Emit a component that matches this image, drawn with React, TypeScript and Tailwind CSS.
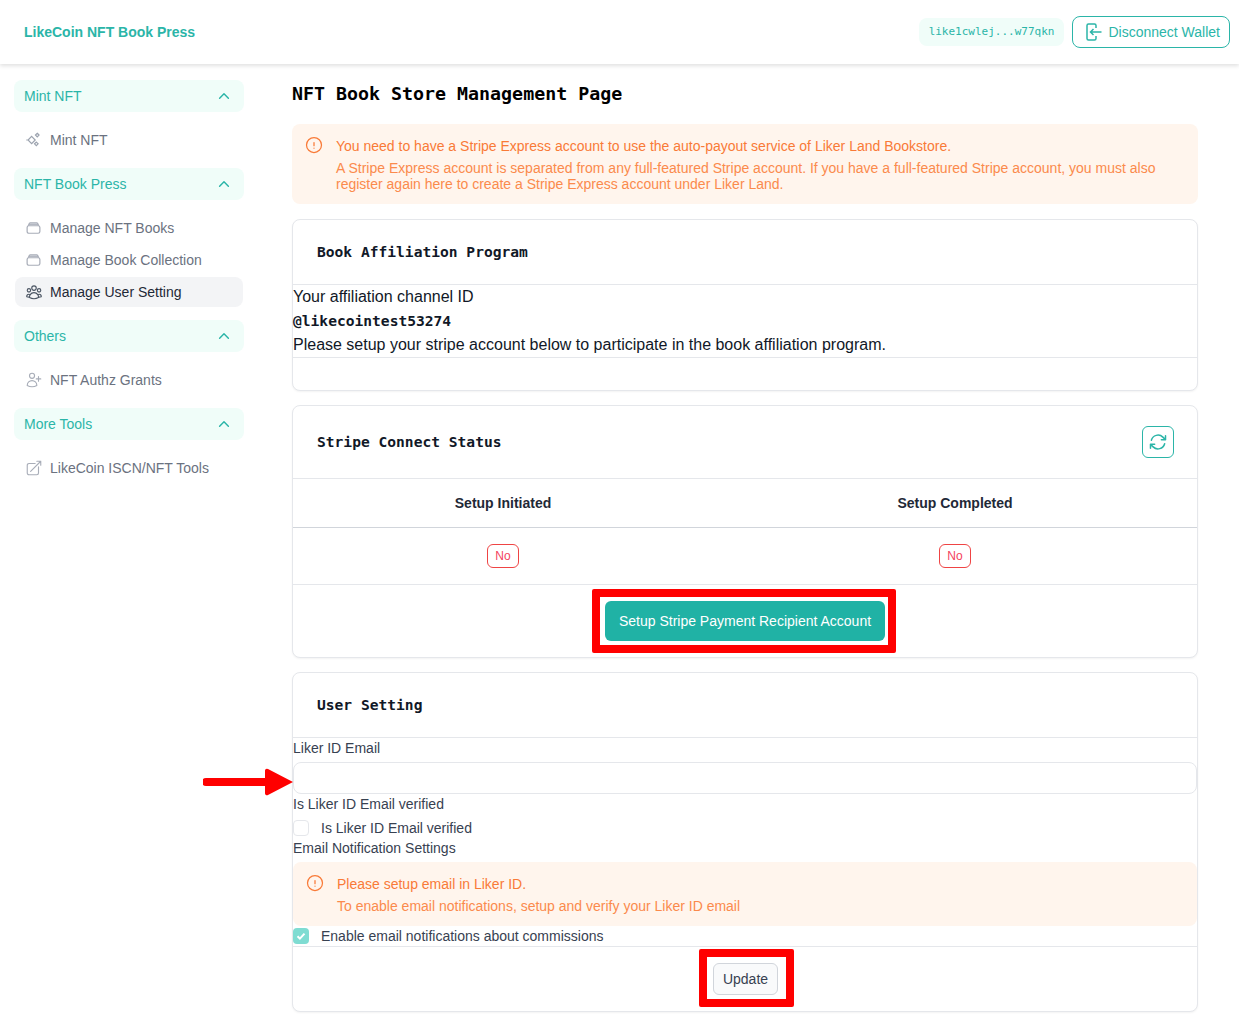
import {
  HiOutlineArrowPath,
  HiOutlineArrowTopRightOnSquare,
  HiOutlineChevronUp,
  HiOutlineExclamationCircle,
  HiOutlineUserGroup,
  HiOutlineUserPlus,
} from "react-icons/hi2";
import type { ReactNode } from "react";

const mono = "font-['DejaVu_Sans_Mono',monospace]";

const SparkIcon = () => (
  <svg width="16" height="16" viewBox="0 0 16 16" fill="none" stroke="#9ca3af" strokeWidth="1.3">
    <path d="M6 4.2L9.8 8 6 11.8 2.2 8z" />
    <path d="M12 .8l1.9 1.9L12 4.6l-1.9-1.9z" />
    <path d="M11 10.2l1.9 1.9L11 14l-1.9-1.9z" />
    <path d="M.3 8h1.4" />
  </svg>
);

const StackIcon = () => (
  <svg width="16" height="16" viewBox="0 0 16 16" fill="none" stroke="#a8adb8" strokeWidth="1.3">
    <rect x="1.2" y="5.6" width="13.6" height="8" rx="1.8" />
    <path d="M2.6 5.6l.6-2a1.4 1.4 0 0 1 1.3-1.1h7a1.4 1.4 0 0 1 1.3 1.1l.6 2" />
    <path d="M3.2 4h9.6" />
  </svg>
);

const DoorIcon = () => (
  <svg width="16" height="18" viewBox="0 0 16 18" fill="none" stroke="currentColor" strokeWidth="1.5">
    <path d="M10 5V2.5A1.5 1.5 0 0 0 8.5 1H2.5A1.5 1.5 0 0 0 1 2.5v13A1.5 1.5 0 0 0 2.5 17h6a1.5 1.5 0 0 0 1.5-1.5V13" />
    <path d="M15.5 9H4.5M7.5 6l-3 3 3 3" />
  </svg>
);

const MenuGroup = ({ label, children }: { label: string; children: ReactNode }) => (
  <div>
    <div className="flex h-8 items-center justify-between rounded-lg bg-[#f0fdf9] pl-[10px] pr-[13px] text-[14px] text-[#2bb5a8]">
      <span>{label}</span>
      <HiOutlineChevronUp className="size-[14px] [stroke-width:2.5]" />
    </div>
    <div className="mx-px flex flex-col gap-[2px] py-[13px]">{children}</div>
  </div>
);

const MenuItem = ({ icon, label, active }: { icon: ReactNode; label: string; active?: boolean }) => (
  <div
    className={`flex h-[30px] items-center gap-[9px] rounded-lg pl-[11px] text-[14px] ${
      active ? "bg-[#f3f4f6] text-[#1f2937]" : "text-[#6b7280]"
    }`}
  >
    <span className="flex w-[15px] justify-center">{icon}</span>
    {label}
  </div>
);

const Card = ({ children }: { children: ReactNode }) => (
  <section className="rounded-lg border border-[#e5e7eb] bg-white shadow-[0_1px_2px_rgba(0,0,0,0.05)]">
    {children}
  </section>
);

const CardTitle = ({ text, h, children }: { text: string; h: string; children?: ReactNode }) => (
  <div className={`flex items-center justify-between border-b border-[#e5e7eb] pl-6 pr-[23px] ${h}`}>
    <h2 className={`${mono} text-[14.6px] font-bold text-[#111827]`}>{text}</h2>
    {children}
  </div>
);

const Alert = ({ className, children }: { className: string; children: ReactNode }) => (
  <div className={`flex rounded-lg bg-[#fff5ed] pl-3 text-[14px] text-[#fb8a4c] ${className}`}>
    <HiOutlineExclamationCircle className="mt-[-1px] size-[20px] shrink-0 text-[#f97a37]" />
    <div className="ml-3 min-w-0 flex-1 pr-[30px]">{children}</div>
  </div>
);

const Check = ({ on, label }: { on?: boolean; label: string }) => (
  <label className="flex items-center text-[14px] text-[#374151]">
    <span
      className={`flex size-4 items-center justify-center rounded-[4px] ${
        on ? "bg-[#7fdcd2]" : "border border-[#e5e7eb]"
      }`}
    >
      {on && (
        <svg width="10" height="10" viewBox="0 0 10 10" fill="none" stroke="white" strokeWidth="2">
          <path d="M1.5 5.2l2.4 2.4 4.6-5" />
        </svg>
      )}
    </span>
    <span className="ml-3">{label}</span>
  </label>
);

const NoBadge = () => (
  <span className="inline-block h-6 rounded-md border border-[#ef4444] bg-white px-[7px] text-[12px] leading-[22px] text-[#f43f5e]">
    No
  </span>
);

export default function App() {
  return (
    <div className="h-[1022px] overflow-hidden bg-white font-['Liberation_Sans',Arial,sans-serif]">
      <header className="relative flex h-16 items-center justify-between pl-6 pr-[9px] shadow-[0_2px_4px_rgba(0,0,0,0.12)]">
        <div className="text-[14px] font-bold text-[#2bb5a8]">LikeCoin NFT Book Press</div>
        <div className="flex items-center gap-2">
          <div className={`${mono} flex h-7 items-center rounded-lg bg-[#f0fdf9] px-[10px] pt-px text-[11px] text-[#2bb5a8]`}>
            like1cwlej...w77qkn
          </div>
          <button className="flex h-8 items-center gap-[6px] rounded-lg border border-[#2bb5a8] pl-[13px] pr-[9px] text-[14px] text-[#2bb5a8]">
            <DoorIcon />
            Disconnect Wallet
          </button>
        </div>
      </header>

      <div className="flex">
        <aside className="w-[292px] shrink-0 pl-[14px] pr-[48px] pt-4">
          <MenuGroup label="Mint NFT">
            <MenuItem icon={<SparkIcon />} label="Mint NFT" />
          </MenuGroup>
          <MenuGroup label="NFT Book Press">
            <MenuItem icon={<StackIcon />} label="Manage NFT Books" />
            <MenuItem icon={<StackIcon />} label="Manage Book Collection" />
            <MenuItem
              icon={<HiOutlineUserGroup className="size-[18px] shrink-0 text-[#4b5563]" />}
              label="Manage User Setting"
              active
            />
          </MenuGroup>
          <MenuGroup label="Others">
            <MenuItem icon={<HiOutlineUserPlus className="size-[18px] shrink-0 text-[#a8adb8]" />} label="NFT Authz Grants" />
          </MenuGroup>
          <MenuGroup label="More Tools">
            <MenuItem
              icon={<HiOutlineArrowTopRightOnSquare className="size-[18px] shrink-0 text-[#a8adb8]" />}
              label="LikeCoin ISCN/NFT Tools"
            />
          </MenuGroup>
        </aside>

        <main className="w-[906px] shrink-0">
          <h1 className={`${mono} mt-4 h-7 text-[18.3px] font-bold leading-7 text-black`}>
            NFT Book Store Management Page
          </h1>
          <Alert className="mt-4 h-20 pt-[12px]">
            <p className="h-6 leading-[20px] text-[#f97a37]">
              You need to have a Stripe Express account to use the auto-payout service of Liker Land Bookstore.
            </p>
            <p className="leading-4">
              A Stripe Express account is separated from any full-featured Stripe account. If you have a full-featured Stripe account, you must also register again here to create a Stripe Express account under Liker Land.
            </p>
          </Alert>

          <div className="mt-[15px] flex flex-col gap-[14px]">
            <Card>
              <CardTitle text="Book Affiliation Program" h="h-[65px]" />
              <div className="border-b border-[#e5e7eb] text-[16px] leading-6 text-[#111827]">
                <div>Your affiliation channel ID</div>
                <div className={`${mono} text-[14.6px] font-bold`}>@likecointest53274</div>
                <div>Please setup your stripe account below to participate in the book affiliation program.</div>
              </div>
              <div className="h-8" />
            </Card>

            <Card>
              <CardTitle text="Stripe Connect Status" h="h-[73px]">
                <button className="flex size-8 items-center justify-center rounded-md border border-[#2bb5a8] text-[#2bb5a8]">
                  <HiOutlineArrowPath className="size-5 [stroke-width:1.8]" />
                </button>
              </CardTitle>
              <div className="grid grid-cols-[420px_1fr] text-center text-[14px]">
                <div className="flex h-[49px] items-center justify-center border-b border-[#d1d5db] font-bold text-[#1f2937]">
                  Setup Initiated
                </div>
                <div className="flex h-[49px] items-center justify-center border-b border-[#d1d5db] font-bold text-[#1f2937]">
                  Setup Completed
                </div>
                <div className="flex h-[57px] items-center justify-center border-b border-[#e5e7eb]">
                  <NoBadge />
                </div>
                <div className="flex h-[57px] items-center justify-center border-b border-[#e5e7eb]">
                  <NoBadge />
                </div>
              </div>
              <div className="flex h-[72px] items-center justify-center">
                <div className="relative">
                  <button className="h-10 w-[280px] rounded-md bg-[#20b2a5] text-[14px] text-white">
                    Setup Stripe Payment Recipient Account
                  </button>
                  <div className="absolute -bottom-3 -left-[13px] -right-[11px] -top-3 rounded-[2px] border-8 border-[#ff0000]" />
                </div>
              </div>
            </Card>

            <Card>
              <CardTitle text="User Setting" h="h-[65px]" />
              <div className="border-b border-[#e5e7eb] text-[14px] text-[#374151]">
                <div className="h-6 leading-[21px]">Liker ID Email</div>
                <div className="relative h-8 rounded-lg border border-[#e5e7eb]">
                  <svg
                    className="absolute left-[-91px] top-[5px]"
                    width="90"
                    height="28"
                    viewBox="0 0 90 28"
                    fill="#ff0000"
                  >
                    <path d="M3 10h59V3a2 2 0 0 1 3-2l25 13-25 13a2 2 0 0 1-3-2v-7H3a4 4 0 0 1 0-8z" />
                  </svg>
                </div>
                <div className="h-[23px] leading-5">Is Liker ID Email verified</div>
                <div className="flex h-[22px] items-center">
                  <Check label="Is Liker ID Email verified" />
                </div>
                <div className="h-[23px] leading-[18px]">Email Notification Settings</div>
                <Alert className="h-16 pt-[12px]">
                  <p className="h-[22px] leading-[20px] text-[#f97a37]">Please setup email in Liker ID.</p>
                  <p className="leading-[20px]">To enable email notifications, setup and verify your Liker ID email</p>
                </Alert>
                <div className="flex h-5 items-center">
                  <Check on label="Enable email notifications about commissions" />
                </div>
              </div>
              <div className="flex h-16 items-center justify-center">
                <div className="relative ml-px">
                  <button className="h-8 w-[65px] rounded-md border border-[#d1d5db] bg-[#f9fafb] text-[14px] text-[#374151]">
                    Update
                  </button>
                  <div className="absolute -bottom-3 -left-[14px] -right-4 -top-[14px] rounded-[2px] border-8 border-[#ff0000]" />
                </div>
              </div>
            </Card>
          </div>
        </main>
      </div>
    </div>
  );
}
